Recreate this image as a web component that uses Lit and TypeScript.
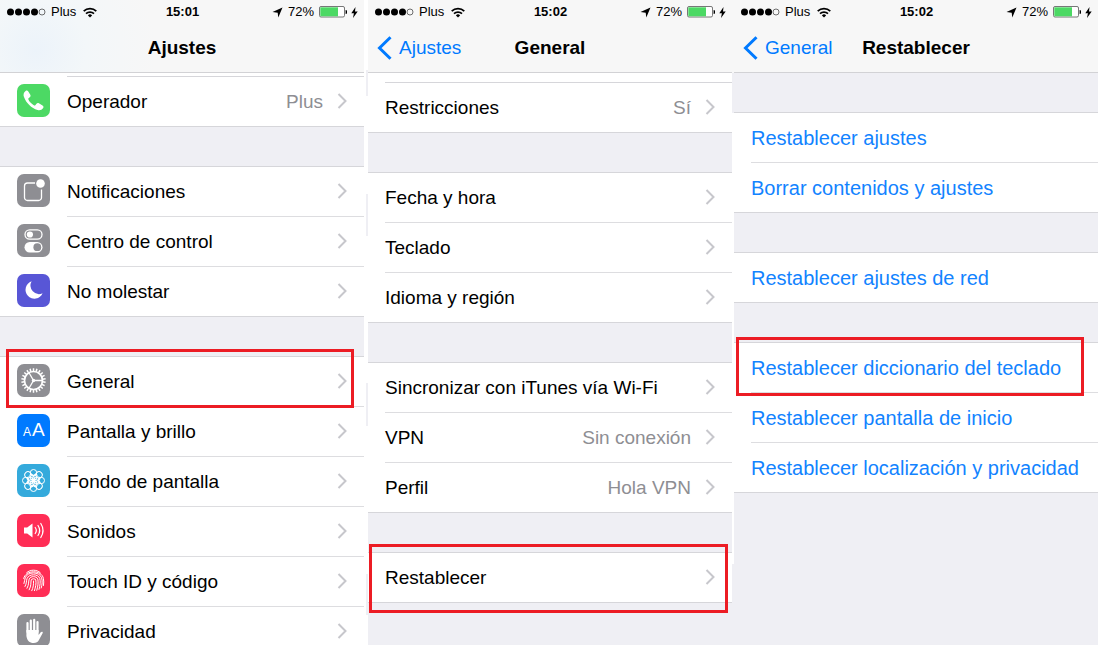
import { LitElement, html, svg, css, nothing, type TemplateResult } from "lit";
import { customElement, property } from "lit/decorators.js";
import { classMap } from "lit/directives/class-map.js";

interface RowData {
  label: string;
  value?: string;
  icon?: string;
  mark?: string;
}

interface ScreenData {
  title: string;
  back?: string;
  time: string;
  peek: string;
  actions?: boolean;
  groups: RowData[][];
}

const SCREENS: ScreenData[] = [
  {
    title: "Ajustes",
    time: "15:01",
    peek: "short",
    groups: [
      [{ label: "Operador", value: "Plus", icon: "phone" }],
      [
        { label: "Notificaciones", icon: "notifications" },
        { label: "Centro de control", icon: "control" },
        { label: "No molestar", icon: "moon" },
      ],
      [
        { label: "General", icon: "gear", mark: "mark-general" },
        { label: "Pantalla y brillo", icon: "display" },
        { label: "Fondo de pantalla", icon: "wallpaper" },
        { label: "Sonidos", icon: "sound" },
        { label: "Touch ID y código", icon: "touch" },
        { label: "Privacidad", icon: "hand" },
      ],
    ],
  },
  {
    title: "General",
    back: "Ajustes",
    time: "15:02",
    peek: "tall",
    groups: [
      [{ label: "Restricciones", value: "Sí" }],
      [{ label: "Fecha y hora" }, { label: "Teclado" }, { label: "Idioma y región" }],
      [
        { label: "Sincronizar con iTunes vía Wi-Fi" },
        { label: "VPN", value: "Sin conexión" },
        { label: "Perfil", value: "Hola VPN" },
      ],
      [{ label: "Restablecer", mark: "mark-reset" }],
    ],
  },
  {
    title: "Restablecer",
    back: "General",
    time: "15:02",
    peek: "",
    actions: true,
    groups: [
      [{ label: "Restablecer ajustes" }, { label: "Borrar contenidos y ajustes" }],
      [{ label: "Restablecer ajustes de red" }],
      [
        { label: "Restablecer diccionario del teclado", mark: "mark-dictionary" },
        { label: "Restablecer pantalla de inicio" },
        { label: "Restablecer localización y privacidad" },
      ],
    ],
  },
];

const spin = (n: number, draw: (angle: number) => TemplateResult) =>
  Array.from({ length: n }, (_, i) => draw((360 / n) * i));

const ICONS: Record<string, { color: string; art: () => TemplateResult }> = {
  phone: {
    color: "#4cd964",
    art: () => svg`<path fill="#fff" d="M8.600 6.900c1-.8 2-.5 2.700.5l2 3.300c.5 1 .3 1.800-.5 2.500l-1.100.9c-.5.5-.5 1-.2 1.600 1.200 2.300 3 4.100 5.300 5.500.7.4 1.200.3 1.700-.3l1-1.200c.7-.8 1.500-.9 2.400-.4l3.600 2.100c1.100.7 1.300 1.600.6 2.700-1.300 1.900-3.200 2.700-5.500 2-6.300-2-11.300-6.700-13.600-13-.9-2.500-.5-4.700 1.600-6.200z"/>`,
  },
  notifications: {
    color: "#8e8e93",
    art: () => svg`<path fill="none" stroke="#fff" stroke-width="1.300" d="M18 9H10.500a3 3 0 0 0-3 3v11.500a3 3 0 0 0 3 3h11a3 3 0 0 0 3-3V15.500"/><circle cx="23.500" cy="9.500" r="4.300" fill="#fff"/>`,
  },
  control: {
    color: "#8e8e93",
    art: () => svg`<rect x="8" y="5.800" width="17" height="9.400" rx="4.700" fill="none" stroke="#fff" stroke-width="1.300"/><circle cx="12.900" cy="10.500" r="3.100" fill="#fff"/><rect x="7.500" y="18" width="18" height="10.400" rx="5.200" fill="#fff"/><circle cx="20.300" cy="23.200" r="3.900" fill="#8e8e93"/>`,
  },
  moon: {
    color: "#5856d6",
    art: () => svg`<path fill="#fff" d="M14.600 7.300A8.900 8.900 0 1 0 25.600 19.300 8.600 8.600 0 0 1 14.600 7.300z"/>`,
  },
  gear: {
    color: "#8e8e93",
    art: () => svg`<g stroke="#fff" fill="none">
      <circle cx="16.500" cy="16.500" r="9" stroke-width="1.700"/>
      ${spin(22, (a) => svg`<path stroke-width="1.500" d="M16.500 7.400V4.300" transform="rotate(${a} 16.500 16.500)"/>`)}
      ${spin(3, (a) => svg`<path stroke-width="1.300" d="M16.500 16.500H25.500" transform="rotate(${a} 16.500 16.500)"/>`)}
      </g><circle cx="16.500" cy="16.500" r="1.700" fill="#fff"/>`,
  },
  display: {
    color: "#007aff",
    art: () => svg`<g fill="#fff" font-family="Liberation Sans, Arial, sans-serif"><text x="6" y="22" font-size="12">A</text><text x="15" y="22" font-size="19">A</text></g>`,
  },
  wallpaper: {
    color: "#34aadc",
    art: () => svg`<g fill="none" stroke="#fff" stroke-width="1">
      ${spin(8, (a) => svg`<circle cx="16.500" cy="8.700" r="3.200" transform="rotate(${a} 16.500 16.500)"/><ellipse cx="16.500" cy="13" rx="1.900" ry="3.200" transform="rotate(${a + 22.5} 16.500 16.500)"/>`)}
      </g><circle cx="16.500" cy="16.500" r="1.500" fill="#fff"/>`,
  },
  sound: {
    color: "#ff2d55",
    art: () => svg`<path fill="#fff" d="M7 13.600h3.200l5.300-4.100v14l-5.300-4.100H7z"/><g fill="none" stroke="#fff" stroke-width="1.200" stroke-linecap="round"><path d="M18.200 13.500a5 5 0 0 1 0 6"/><path d="M21 11.500a9 9 0 0 1 0 10"/><path d="M23.800 9.500a13 13 0 0 1 0 14"/></g>`,
  },
  touch: {
    color: "#ff2d55",
    art: () => svg`<g fill="none" stroke="#fff" stroke-width="1" stroke-linecap="round">
      <path d="M9.700 8.600c4-3.300 9.600-3.300 13.500 0"/>
      <path d="M6.700 14.500c1.600-9 18-9 19.700 0 .4 2.200.5 4.500.1 7"/>
      <path d="M7 19.500c.8-2 .4-3.800 1.200-5.700 2.500-6.500 14-6.500 16.400 0 .9 3 .7 7-.4 10.200"/>
      <path d="M8 22.500c2-3.500 1-5.500 2.100-8.100 2.100-4.800 10.800-4.800 12.700 0 .8 3 .3 7-.8 11"/>
      <path d="M10 24.300c2.300-4 1.200-6.700 2.200-9.200 1.400-3.300 7.100-3.300 8.600 0 .8 3.500 0 7.700-1 11.200"/>
      <path d="M12.200 25.800c2.300-4.300 1.400-7.200 2-9.800.6-1.700 4-1.700 4.600 0 .6 3.600-.3 7.300-1.300 10.600"/>
      <path d="M14.800 26.700c1.500-3.200 1.900-6.300 1.700-9.700"/></g>`,
  },
  hand: {
    color: "#8e8e93",
    art: () => svg`<g fill="none" stroke="#fff" stroke-width="2.200" stroke-linecap="round"><path d="M10.500 18V9M13.800 17V6.500M17.200 17V5.800M20.500 18V8"/></g><path fill="#fff" d="M9.400 16h12.200v5l2.100-2.700c.8-1 2.700-.6 1.900.9l-3.800 7c-1 1.800-2.600 2.800-5 2.800-4.500 0-6.700-2.400-7.400-7z"/>`,
  },
};

@customElement("status-bar")
class StatusBar extends LitElement {
  @property() time = "";

  static styles = css`
    :host {
      display: grid;
      grid-template-columns: 1fr auto 1fr;
      align-items: center;
      height: 24px;
      padding: 0 6px 0 7px;
      font-size: 13px;
      line-height: 16px;
    }
    .side {
      display: flex;
      align-items: center;
      gap: 5px;
    }
    .end {
      justify-content: flex-end;
    }
    .wifi {
      margin-left: 2px;
    }
    .time {
      font-weight: bold;
    }
    svg {
      display: block;
    }
    .power {
      display: flex;
      align-items: center;
      gap: 4px;
    }
  `;

  render() {
    return html`
      <div class="side">
        <svg width="39" height="8" viewBox="0 0 39 8">
          ${[3.5, 11.5, 19.5, 27.5].map((x) => svg`<circle cx=${x} cy="4" r="3.500"/>`)}
          <circle cx="35" cy="4" r="3" fill="none" stroke="#333" stroke-width="0.700" />
        </svg>
        <span>Plus</span>
        <svg class="wifi" width="14" height="11" viewBox="0 0 14 11">
          <g fill="none" stroke="#000" stroke-width="1.700">
            <path d="M.7 4.200a9 9 0 0 1 12.600 0" />
            <path d="M3 6.700a5.700 5.700 0 0 1 8 0" />
          </g>
          <path d="M7 10.500 4.900 8.400a3 3 0 0 1 4.200 0z" />
        </svg>
      </div>
      <span class="time">${this.time}</span>
      <div class="side end">
        <svg width="11" height="11" viewBox="0 0 11 11"><path d="M10.500.5 6.300 10.500 5.700 5.700.5 5.100z" /></svg>
        <span>72%</span>
        <div class="power">
          <svg width="28" height="12" viewBox="0 0 28 12">
            <rect x=".5" y=".5" width="25" height="10.500" rx="1.500" fill="#fff" stroke="#555" stroke-width=".8" />
            <rect x="1.300" y="1.300" width="17.700" height="9" fill="#4cd964" />
            <path d="M26.600 4a2 2 0 0 1 0 4z" />
          </svg>
          <svg width="7" height="11" viewBox="0 0 7 11"><path d="M4.500 0 .3 6.200h2.600L2 11l4.700-6.500H4z" /></svg>
        </div>
      </div>
    `;
  }
}

@customElement("settings-row")
class SettingsRow extends LitElement {
  @property({ attribute: false }) row!: RowData;
  @property({ type: Boolean }) action = false;

  static styles = css`
    :host {
      display: block;
      position: relative;
    }
    .row {
      display: flex;
      box-sizing: border-box;
      width: 100%;
      height: 50px;
      margin: 0;
      padding: 0 0 0 17px;
      border: 0;
      background: #fff;
      color: #000;
      font: inherit;
      text-align: left;
      text-decoration: none;
    }
    :host([last]) .row {
      border-bottom: 1px solid #d6d6da;
    }
    .icon {
      flex: none;
      margin: 7px 17px 0 0;
      width: 33px;
      height: 33px;
      border-radius: 7px;
    }
    .body {
      flex: 1;
      display: flex;
      align-items: center;
      min-width: 0;
      padding-right: 17px;
      white-space: nowrap;
      border-bottom: 1px solid #dddde0;
    }
    :host([last]) .body {
      border-bottom: 0;
    }
    .label {
      flex: 1;
    }
    .row.action {
      color: #1283ff;
      font-size: 20px;
    }
    .value {
      color: #8e8e93;
      margin-right: 14px;
    }
    .chevron {
      margin-bottom: 2px;
    }
    .mark {
      position: absolute;
      z-index: 1;
      border: 3px solid #ec1c24;
      pointer-events: none;
    }
    .mark-general {
      inset: -8px 10px -1px 6px;
    }
    .mark-reset {
      inset: -9px 4px -10px 1px;
    }
    .mark-dictionary {
      inset: -6px 14px -3px 2px;
    }
  `;

  render() {
    const { label, value, icon, mark } = this.row;
    const outline = mark ? html`<span class="mark ${mark}"></span>` : nothing;
    if (this.action) {
      return html`<button class="row action" type="button">
          <span class="body"><span class="label">${label}</span></span></button
        >${outline}`;
    }
    const art = icon ? ICONS[icon] : undefined;
    return html`<a class="row" href="#">
        ${art
          ? html`<svg class="icon" viewBox="0 0 33 33" aria-hidden="true">
              <rect width="33" height="33" fill=${art.color} />
              ${art.art()}
            </svg>`
          : nothing}
        <span class="body">
          <span class="label">${label}</span>
          ${value ? html`<span class="value">${value}</span>` : nothing}
          <svg class="chevron" width="10" height="16" viewBox="0 0 10 16" aria-hidden="true">
            <path d="M1.500 1 8.500 8 1.500 15" fill="none" stroke="#c7c7cc" stroke-width="2" />
          </svg>
        </span></a
      >${outline}`;
  }
}

@customElement("settings-screen")
class SettingsScreen extends LitElement {
  @property({ attribute: false }) data!: ScreenData;

  static styles = css`
    :host {
      display: block;
      min-width: 0;
      overflow: hidden;
      background: #efeff4;
    }
    .header {
      background: #f7f7f7;
      border-bottom: 1px solid #d2d2d5;
    }
    .tinted {
      background: radial-gradient(circle at 36px 50px, #ecf3fa 0, #f3f7f9 50px, #f7f7f7 120px);
    }
    .nav {
      display: grid;
      grid-template-columns: 1fr auto 1fr;
      align-items: center;
      height: 48px;
      padding: 0 9px;
    }
    .title {
      grid-column: 2;
      margin: 0;
      font-size: 19px;
      line-height: 24px;
      font-weight: bold;
    }
    .back {
      display: flex;
      align-items: center;
      gap: 7px;
      color: #007aff;
      text-decoration: none;
    }
    .group {
      border-top: 1px solid #d6d6da;
      margin-top: 39px;
    }
    .continued {
      border-top: 0;
      margin-top: 0;
    }
    .peek {
      display: flex;
      background: #fff;
      padding-left: 17px;
    }
    .peek::after {
      content: "";
      flex: 1;
      border-bottom: 1px solid #d6d6da;
    }
    .short {
      height: 4px;
      padding-left: 67px;
    }
    .tall {
      height: 10px;
    }
  `;

  render() {
    const { title, back, time, peek, groups, actions } = this.data;
    return html`
      <header class=${classMap({ header: true, tinted: !back })}>
        <status-bar .time=${time}></status-bar>
        <nav class="nav">
          ${back
            ? html`<a class="back" href="#">
                <svg width="15" height="24" viewBox="0 0 15 24" aria-hidden="true">
                  <path d="M13.500 1.200 2.500 12l11 10.800" fill="none" stroke="#007aff" stroke-width="3" />
                </svg>
                <span>${back}</span>
              </a>`
            : nothing}
          <h2 class="title">${title}</h2>
        </nav>
      </header>
      ${peek ? html`<div class="peek ${peek}"></div>` : nothing}
      ${groups.map(
        (rows, g) => html`<section class=${classMap({ group: true, continued: g === 0 && !!peek })}>
          ${rows.map(
            (row, i) => html`<settings-row
              .row=${row}
              ?action=${!!actions}
              ?last=${i === rows.length - 1}
            ></settings-row>`,
          )}
        </section>`,
      )}
    `;
  }
}

@customElement("app-root")
class AppRoot extends LitElement {
  static styles = css`
    :host {
      display: grid;
      grid-template-columns: 1fr 4px 1fr 2px 1fr 2px;
      height: 100vh;
      overflow: hidden;
      background: #fff;
      color: #000;
      font-family: "Liberation Sans", Arial, sans-serif;
      font-size: 19px;
      line-height: 24px;
    }
    .seam-left {
      margin-left: 2px;
      background: linear-gradient(
        #fff 70px, #efeff4 70px 96px, #fff 96px 194px, #efeff4 194px 236px,
        #fff 236px 383px, #efeff4 383px 426px, #fff 426px 574px, #efeff4 574px 615px, #fff 615px
      );
    }
    .seam-right {
      background: linear-gradient(
        #f7f7f7 73px, #efeff4 73px 113px, #fff 113px 564px, #efeff4 564px
      );
    }
  `;

  render() {
    return html`
      <settings-screen .data=${SCREENS[0]}></settings-screen>
      <div class="seam-left"></div>
      <settings-screen .data=${SCREENS[1]}></settings-screen>
      <div class="seam-right"></div>
      <settings-screen .data=${SCREENS[2]}></settings-screen>
    `;
  }
}
